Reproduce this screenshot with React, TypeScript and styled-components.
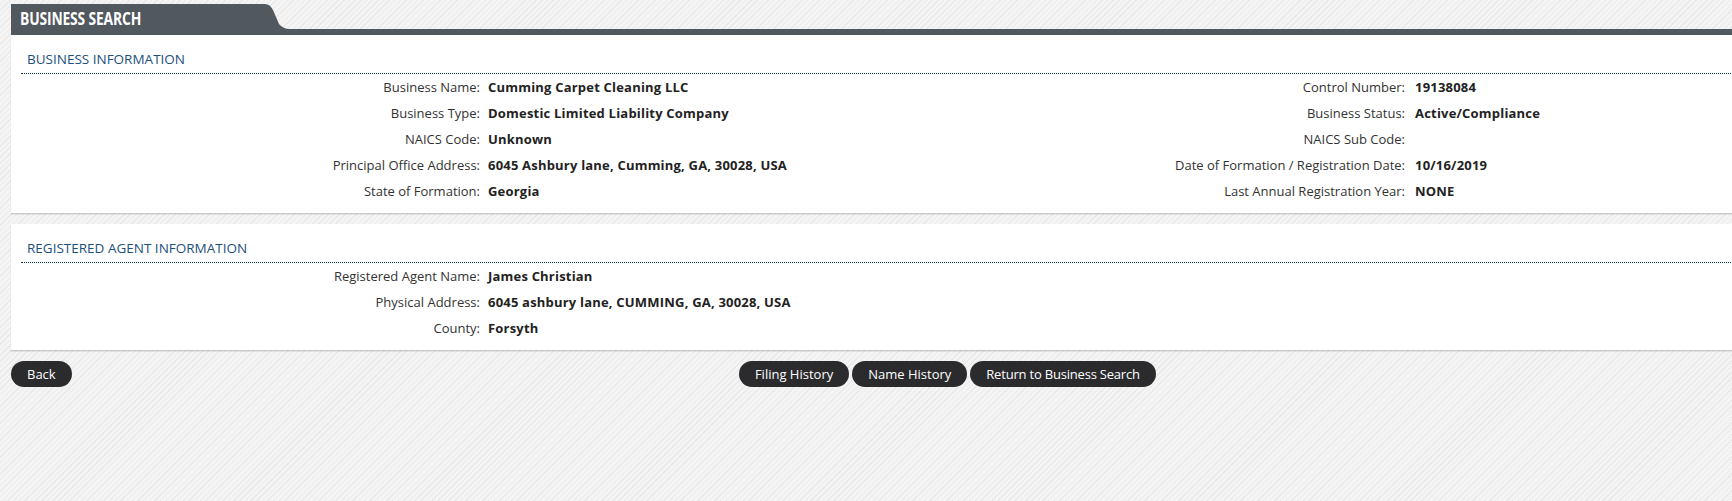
import React from "react";
import styled, { createGlobalStyle } from "styled-components";

const GlobalStyle = createGlobalStyle`
    html, body {
        margin: 0;
        padding: 0;
        overflow: hidden;
    }
    body {
        font-family: "Open Sans", "Liberation Sans", sans-serif;
        font-size: 13px;
        color: #333;
        background-color: #f2f2f2;
        background-image: repeating-linear-gradient(
            135deg,
            #f4f4f4 0px,
            #f4f4f4 3px,
            #e9e9e9 3px,
            #e9e9e9 4px
        );
        min-height: 501px;
    }
`;

const businessRows = [
    [
        { label: "Business Name:", value: "Cumming Carpet Cleaning LLC" },
        { label: "Business Type:", value: "Domestic Limited Liability Company" },
        { label: "NAICS Code:", value: "Unknown" },
        { label: "Principal Office Address:", value: "6045 Ashbury lane, Cumming, GA, 30028, USA" },
        { label: "State of Formation:", value: "Georgia" },
    ],
    [
        { label: "Control Number:", value: "19138084" },
        { label: "Business Status:", value: "Active/Compliance" },
        { label: "NAICS Sub Code:", value: "" },
        { label: "Date of Formation / Registration Date:", value: "10/16/2019" },
        { label: "Last Annual Registration Year:", value: "NONE" },
    ],
];

const agentRows = [
    { label: "Registered Agent Name:", value: "James Christian" },
    { label: "Physical Address:", value: "6045 ashbury lane, CUMMING, GA, 30028, USA" },
    { label: "County:", value: "Forsyth" },
];

export default function App() {
    return (
        <>
            <GlobalStyle />
            <Page>
                <TitleBar>
                    <TitleTab>
                        <TitleText>BUSINESS SEARCH</TitleText>
                    </TitleTab>
                    <TabCurve width="28" height="31" viewBox="0 0 28 31">
                        <path d="M0 0 H3 Q8 0 11 6 L17 20 Q21 25 28 25 V31 H0 Z" fill="#51585e" />
                    </TabCurve>
                    <TitleLine />
                </TitleBar>

                <Panel>
                    <SectionHeader>BUSINESS INFORMATION</SectionHeader>
                    <Columns>
                        {businessRows.map((col, ci) => (
                            <Column key={ci}>
                                {col.map((row) => (
                                    <Row key={row.label} $labelWidth={ci === 0 ? 469 : 459} $gap={ci === 0 ? 8 : 10}>
                                        <Label>{row.label}</Label>
                                        <Value>{row.value}</Value>
                                    </Row>
                                ))}
                            </Column>
                        ))}
                    </Columns>
                </Panel>

                <Panel>
                    <SectionHeader>REGISTERED AGENT INFORMATION</SectionHeader>
                    <Column>
                        {agentRows.map((row) => (
                            <Row key={row.label} $labelWidth={469} $gap={8}>
                                <Label>{row.label}</Label>
                                <Value>{row.value}</Value>
                            </Row>
                        ))}
                    </Column>
                </Panel>

                <ButtonBar>
                    <PillButton>Back</PillButton>
                    <CenterGroup>
                        <PillButton>Filing History</PillButton>
                        <PillButton>Name History</PillButton>
                        <PillButton $tight>Return to Business Search</PillButton>
                    </CenterGroup>
                </ButtonBar>
            </Page>
        </>
    );
}

// Styled Components

const Page = styled.div`
    width: 1870px;
    padding: 4px 0 0 11px;
`;

const TitleBar = styled.div`
    display: flex;
    align-items: flex-end;
    height: 31px;
`;

const TitleTab = styled.div`
    width: 251px;
    height: 31px;
    background-color: #51585e;
    display: flex;
    align-items: center;
    padding-left: 9px;
    box-sizing: border-box;
`;

const TitleText = styled.span`
    display: inline-block;
    color: #fff;
    font-family: "Open Sans", "Liberation Sans", sans-serif;
    font-weight: 700;
    font-size: 18px;
    letter-spacing: -0.2px;
    transform: scaleX(0.77);
    transform-origin: left center;
    white-space: nowrap;
    margin-top: -3px;
`;

const TabCurve = styled.svg`
    display: block;
    flex: none;
`;

const TitleLine = styled.div`
    flex: 1;
    height: 6px;
    background-color: #51585e;
`;

const Panel = styled.div`
    background-color: #fff;
    padding: 14px 0 9px;
    margin-bottom: 11px;
    box-shadow: 0 1px 1px rgba(0, 0, 0, 0.12), 0 2px 0 rgba(0, 0, 0, 0.05);
`;

const SectionHeader = styled.div`
    margin: 0 0 0 10px;
    padding: 0 0 4px 6px;
    line-height: 20px;
    font-size: 13.5px;
    color: #1d4f7c;
    border-bottom: 1px dotted #0f3b63;
`;

const Columns = styled.div`
    display: grid;
    grid-template-columns: 935px 935px;
`;

const Column = styled.div`
    display: flex;
    flex-direction: column;
`;

const Row = styled.div<{ $labelWidth: number; $gap: number }>`
    display: grid;
    grid-template-columns: ${(p) => p.$labelWidth}px 1fr;
    column-gap: ${(p) => p.$gap}px;
    height: 26px;
    align-items: center;
    white-space: nowrap;
`;

const Label = styled.span`
    text-align: right;
    color: #333;
`;

const Value = styled.span`
    font-weight: 700;
    color: #222;
    letter-spacing: 0.2px;
`;

const ButtonBar = styled.div`
    display: flex;
    align-items: center;
    margin-top: 1px;
`;

const CenterGroup = styled.div`
    flex: 1;
    display: flex;
    justify-content: center;
    gap: 3px;
    padding-right: 58px;
`;

const PillButton = styled.button<{ $tight?: boolean }>`
    height: 26px;
    padding: 0 16px;
    border: none;
    border-radius: 13px;
    background-color: #2b2b2e;
    color: #fff;
    font-family: "Open Sans", "Liberation Sans", sans-serif;
    font-size: 13px;
    letter-spacing: ${(p) => (p.$tight ? "-0.2px" : "0")};
    cursor: pointer;
`;
